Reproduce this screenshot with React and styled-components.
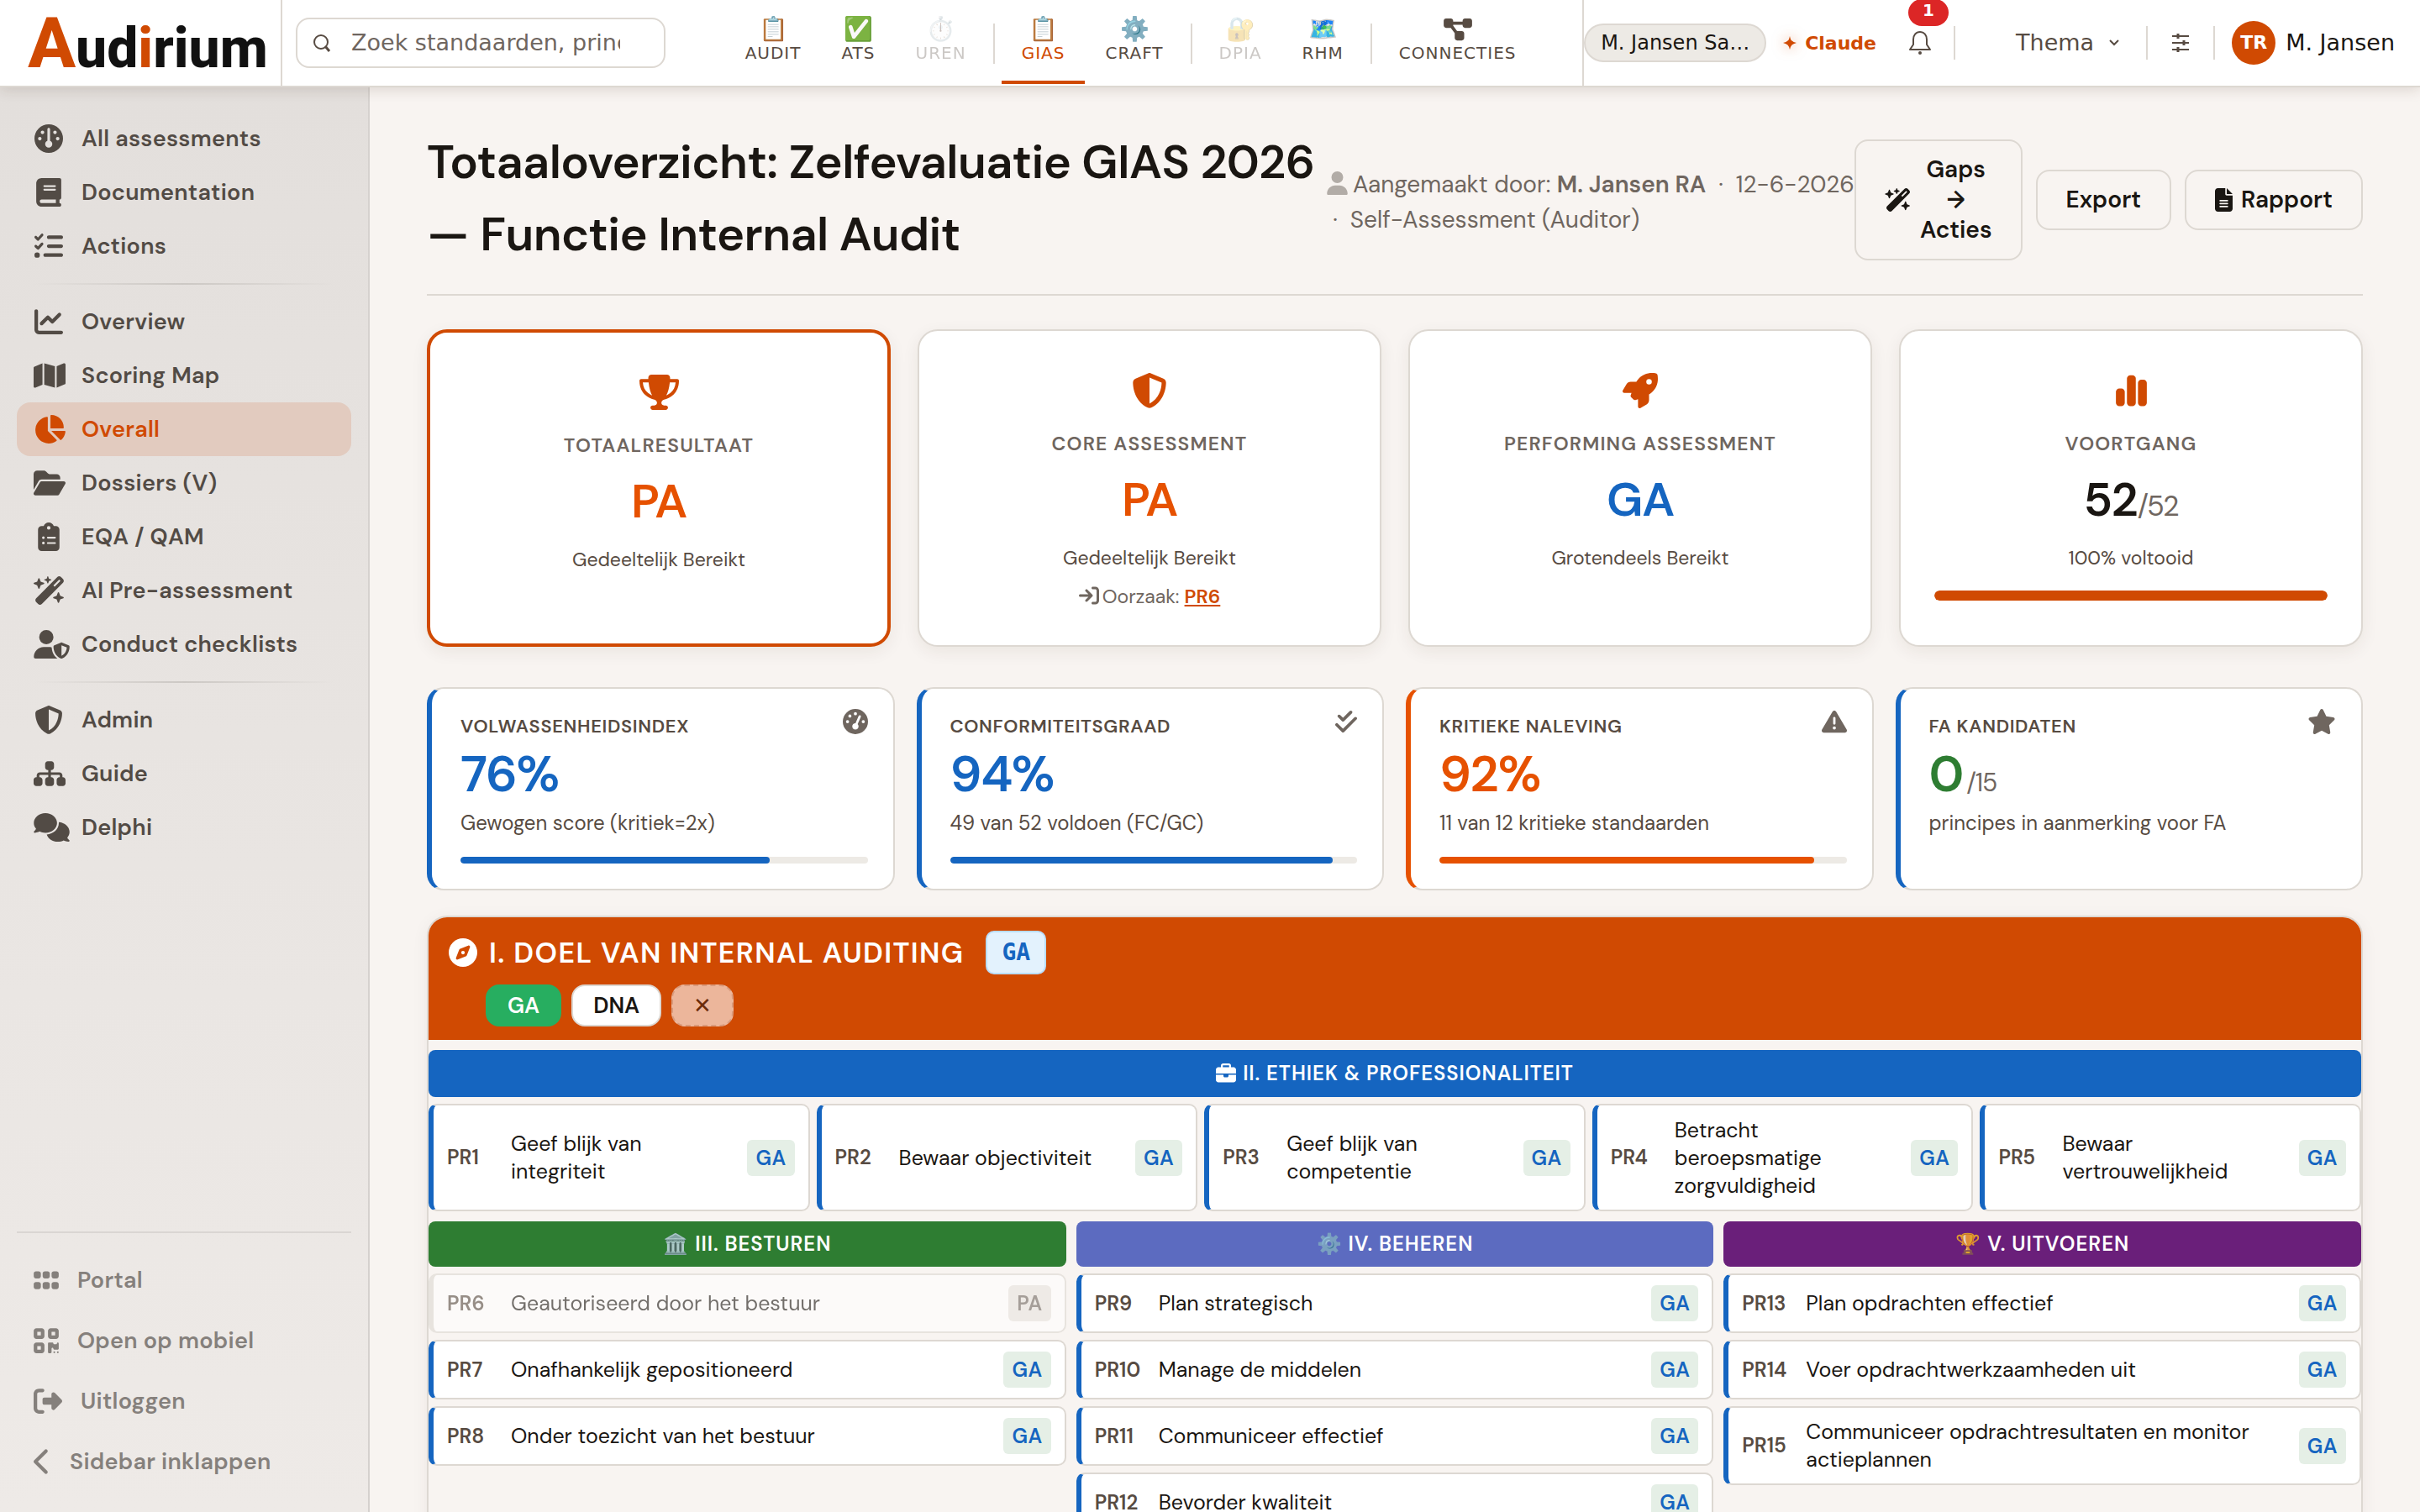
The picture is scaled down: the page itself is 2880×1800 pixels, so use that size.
import styled, { createGlobalStyle } from "styled-components";
import {
  FaGauge,
  FaGaugeHigh,
  FaBook,
  FaListCheck,
  FaChartLine,
  FaMap,
  FaChartPie,
  FaFolderOpen,
  FaClipboardList,
  FaWandMagicSparkles,
  FaUserShield,
  FaShieldHalved,
  FaSitemap,
  FaComments,
  FaGrip,
  FaQrcode,
  FaRightFromBracket,
  FaChevronLeft,
  FaTrophy,
  FaRocket,
  FaChartSimple,
  FaArrowRightToBracket,
  FaCheckDouble,
  FaTriangleExclamation,
  FaStar,
  FaCompass,
  FaBriefcase,
  FaDiagramProject,
  FaUser,
  FaFileLines,
} from "react-icons/fa6";

const GlobalStyle = createGlobalStyle`
  * {
    box-sizing: border-box;
  }
  body {
    margin: 0;
    background-color: #f8f4f1;
    color: #1a1612;
    font-family: "DM Sans", Inter, sans-serif;
    font-size: 28px;
    line-height: 1.5;
  }
  button, input {
    font: inherit;
    color: inherit;
  }
  button {
    cursor: pointer;
  }
  a {
    color: inherit;
    text-decoration: none;
  }
  h1, h2, h3, p, ul {
    margin: 0;
    padding: 0;
    font-weight: inherit;
  }
  ul {
    list-style: none;
  }
`;

/* the icon set is drawn 512 high, $w is the width of the icon's own grid */
const Glyph = styled.svg`
  flex: none;
  height: ${(p) => p.$size}px;
  width: ${(p) => Math.round((p.$size * (p.$w || 512)) / 512)}px;
`;

const Shell = styled.div`
  display: flex;
  flex-direction: column;
  height: 100vh;
  overflow: hidden;
`;

/* top bar */

const TopBar = styled.header`
  display: flex;
  flex: none;
  height: 104px;
  background-color: #fff;
  border-bottom: 2px solid #ddd8d2;
  box-shadow: 0 2px 16px rgba(60, 40, 20, 0.16);
  position: relative;
  z-index: 2;
  font-family: "DejaVu Sans", sans-serif;
  font-size: 27px;
  color: #574b42;
`;

const Logo = styled.a`
  display: flex;
  align-items: baseline;
  justify-content: center;
  width: 336px;
  padding-left: 18px;
  border-right: 2px solid #ddd8d2;
  font-family: Roboto, sans-serif;
  font-size: 66px;
  font-weight: 800;
  line-height: 104px;
  color: #111;

  span {
    color: #d04a02;
  }
`;

const LogoInitial = styled.span`
  font-size: 84px;
`;

const SearchArea = styled.div`
  display: flex;
  align-items: center;
  padding: 0 16px;
`;

const SearchBox = styled.label`
  display: flex;
  align-items: center;
  gap: 24px;
  width: 440px;
  height: 60px;
  padding: 0 52px 0 18px;
  border: 2px solid #ddd8d2;
  border-radius: 16px;

  svg {
    flex: none;
  }
`;

const SearchInput = styled.input`
  width: 100%;
  min-width: 0;
  border: 0;
  padding: 0;
  outline: 0;
  background: none;

  &::placeholder {
    color: #6f665f;
    opacity: 1;
  }
`;

const ModuleNav = styled.nav`
  display: flex;
  flex: 1;
  justify-content: center;
`;

const ModuleLink = styled.a`
  display: flex;
  flex-direction: column;
  align-items: center;
  margin-bottom: 2px;
  padding: 20px 24px 0;
  border-bottom: 4px solid ${(p) => (p.$active ? "#d04a02" : "transparent")};
  color: ${(p) => (p.$active ? "#d04a02" : "inherit")};
  font-size: 20px;
  line-height: 26px;
  letter-spacing: 1px;
  opacity: ${(p) => (p.$disabled ? 0.3 : 1)};
`;

const ModuleIcon = styled.span`
  display: flex;
  align-items: center;
  height: 30px;
  font-size: 28px;
  line-height: 30px;
  letter-spacing: 0;
`;

const ModuleDivider = styled.span`
  width: 2px;
  height: 48px;
  margin: 28px 8px 0;
  background-color: #ddd8d2;
`;

const Tools = styled.div`
  display: flex;
  align-items: center;
  padding-right: 30px;
  border-left: 2px solid #ddd8d2;
`;

const ClientPill = styled.button`
  height: 46px;
  padding: 0 18px;
  border: 2px solid #ddd8d2;
  border-radius: 23px;
  background-color: #edeae5;
  color: #1a1612;
  font-size: 24px;
  line-height: 42px;
`;

const ClaudeLink = styled.a`
  display: flex;
  align-items: center;
  gap: 10px;
  padding: 0 38px 0 20px;
  color: #d04a02;
  font-size: 22px;
  font-weight: 700;

  svg {
    filter: drop-shadow(0 0 8px rgba(208, 74, 2, 0.6));
  }
`;

const IconButton = styled.button`
  display: flex;
  position: relative;
  padding: 0 ${(p) => p.$pad}px;
  border: 0;
  background: none;
`;

const Badge = styled.span`
  position: absolute;
  left: 50%;
  top: -38px;
  width: 48px;
  height: 32px;
  margin-left: -14px;
  border-radius: 16px;
  background-color: #dc2626;
  color: #fff;
  font-size: 20px;
  font-weight: 700;
  line-height: 26px;
`;

const ToolDivider = styled.span`
  width: 2px;
  height: 40px;
  background-color: #ddd8d2;
`;

const BellDivider = styled(ToolDivider)`
  margin-left: 26px;
`;

const ThemeButton = styled.button`
  display: flex;
  align-items: center;
  gap: 18px;
  padding: 0 32px 0 72px;
  border: 0;
  background: none;
`;

const UserButton = styled.button`
  display: flex;
  align-items: center;
  gap: 12px;
  padding: 0 0 0 20px;
  border: 0;
  background: none;
  color: #1a1612;
`;

const Avatar = styled.span`
  width: 52px;
  height: 52px;
  border-radius: 50%;
  background-color: #d04a02;
  color: #fff;
  font-size: 22px;
  font-weight: 700;
  line-height: 52px;
`;

/* sidebar */

const Body = styled.div`
  display: flex;
  flex: 1;
  min-height: 0;
`;

const Sidebar = styled.aside`
  display: flex;
  flex-direction: column;
  justify-content: space-between;
  flex: none;
  width: 440px;
  padding: 29px 20px 24px;
  border-right: 2px solid #d5d1ce;
  background: linear-gradient(#e3dfdc, #eeeae7);
  color: #524b45;
  font-size: 27px;
  font-weight: 600;
  letter-spacing: 0.01em;
`;

const SideLink = styled.a`
  display: flex;
  align-items: center;
  gap: 21px;
  height: 64px;
  padding: 0 20px;
  border-radius: 16px;
  background-color: ${(p) => (p.$active ? "#e2cbbf" : "transparent")};
  color: ${(p) => (p.$active ? "#d04a02" : "inherit")};
`;

const SideIcon = styled.span`
  display: flex;
  justify-content: ${(p) => (p.$wide ? "flex-start" : "center")};
  flex: none;
  width: 36px;
`;

const SideDivider = styled.li`
  height: 2px;
  margin: 12px 20px;
  background: linear-gradient(90deg, transparent, #ccc8c4, transparent);
`;

const FooterList = styled.ul`
  padding-top: 20px;
  border-top: 2px solid #dad6d3;
`;

const FooterLink = styled.a`
  display: flex;
  align-items: center;
  gap: 22px;
  height: 72px;
  padding: 0 20px;
  color: #85807c;
`;

/* page */

const Main = styled.main`
  flex: 1;
  min-width: 0;
  padding: 46px 68px;
  overflow-y: auto;
  scrollbar-width: none;
`;

const PageHead = styled.div`
  display: grid;
  grid-template-columns: minmax(0, 1fr) auto auto;
  align-items: center;
  padding-bottom: 28px;
  border-bottom: 2px solid #ddd8d2;
`;

const Title = styled.h1`
  font-size: 56px;
  font-weight: 600;
  line-height: 86px;
  letter-spacing: -0.01em;
`;

const Meta = styled.p`
  padding-top: 10px;
  color: #6f665f;
  line-height: 42px;

  svg {
    margin-right: 6px;
    vertical-align: -3px;
    opacity: 0.5;
  }
  b {
    font-weight: 600;
  }
`;

const MetaLine = styled.span`
  display: block;
  white-space: nowrap;
`;

const Actions = styled.div`
  display: flex;
  align-items: center;
  gap: 16px;
  padding-top: 4px;
`;

const ActionButton = styled.button`
  display: flex;
  align-items: center;
  gap: 10px;
  padding: 16px 34px;
  border: 2px solid #ddd8d2;
  border-radius: 16px;
  background: none;
  font-weight: 600;
  line-height: 36px;

  span {
    width: min-content;
  }
`;

const CardGrid = styled.div`
  display: grid;
  grid-template-columns: repeat(4, minmax(0, 1fr));
  gap: ${(p) => p.$gap}px;
  margin-top: ${(p) => p.$top}px;
`;

const ResultCard = styled.section`
  padding: 40px 40px 41px;
  border: ${(p) => (p.$primary ? "4px solid #d04a02" : "2px solid #ddd8d2")};
  border-radius: 24px;
  background-color: #fff;
  box-shadow: 0 6px 20px rgba(60, 40, 20, 0.07);
  text-align: center;
`;

const ResultIcon = styled.div`
  display: flex;
  align-items: center;
  justify-content: center;
  height: 62px;
  color: #d04a02;
`;

const ResultLabel = styled.h2`
  margin-top: 15px;
  color: #6f665f;
  font-size: 23px;
  font-weight: 600;
  line-height: 34px;
  letter-spacing: 0.05em;
`;

const ResultValue = styled.p`
  margin: 8px 0 10px;
  color: ${(p) => p.$color};
  font-size: 56px;
  font-weight: 600;
  line-height: 84px;
  letter-spacing: -0.02em;

  small {
    color: #6f665f;
    font-size: 34px;
    font-weight: 400;
    line-height: 34px;
  }
`;

const ResultNote = styled.p`
  color: #574b42;
  font-size: 23px;
  line-height: 34px;
`;

const Cause = styled.p`
  margin-top: 12px;
  color: #6f665f;
  font-size: 23px;
  line-height: 34px;

  svg {
    margin-right: 4px;
    vertical-align: -3px;
  }
  a {
    color: #d04a02;
    font-weight: 600;
    text-decoration: underline;
  }
`;

const Track = styled.div`
  height: ${(p) => p.$height}px;
  margin-top: 22px;
  border-radius: 6px;
  background-color: #edeae5;
  overflow: hidden;
`;

const Fill = styled.div`
  height: 100%;
  border-radius: 6px;
  background-color: ${(p) => p.$color};
`;

const StatCard = styled.section`
  padding: 28px 30px 30px 34px;
  border: 2px solid #ddd8d2;
  border-left: 6px solid ${(p) => p.$accent};
  border-radius: 20px;
  background-color: #fff;
`;

const StatHead = styled.div`
  display: flex;
  justify-content: space-between;
  align-items: flex-start;
  height: 34px;
  color: #6f665f;

  svg {
    margin-top: -4px;
  }
`;

const StatLabel = styled.h2`
  color: #574b42;
  font-size: 22px;
  font-weight: 600;
  line-height: 34px;
  letter-spacing: 0.03em;
`;

const StatValue = styled.p`
  margin: 4px 0;
  color: ${(p) => p.$color};
  font-size: 60px;
  font-weight: 600;
  line-height: 72px;
  letter-spacing: -0.02em;

  small {
    margin-left: 4px;
    color: #6f665f;
    font-size: 30px;
    font-weight: 400;
    line-height: 30px;
  }
`;

const StatNote = styled.p`
  color: #574b42;
  font-size: 24px;
  line-height: 36px;
`;

/* domain map */

const DomainPanel = styled.section`
  margin-top: 30px;
  padding-bottom: 24px;
  border: 2px solid #ddd8d2;
  border-radius: 24px;
  box-shadow: 0 4px 20px rgba(60, 40, 20, 0.06);
  overflow: hidden;
`;

const DomainHead = styled.div`
  display: flex;
  flex-direction: column;
  gap: 12px;
  padding: 16px 24px;
  background-color: #d04a02;
  color: #fff;
`;

const DomainTitle = styled.h2`
  display: flex;
  align-items: center;
  gap: 14px;
  height: 52px;
  font-size: 34px;
  font-weight: 600;
  letter-spacing: 0.04em;
`;

const ScoreTag = styled.span`
  margin-left: 12px;
  padding: 0 17px;
  border: 2px solid #bbdefb;
  border-radius: 10px;
  background-color: #e3f2fd;
  color: #1565c0;
  font-family: "DejaVu Sans Mono", monospace;
  font-size: 28px;
  font-weight: 700;
  line-height: 48px;
  letter-spacing: 0;
`;

const Choices = styled.div`
  display: flex;
  gap: 12px;
  padding-left: 44px;
`;

const Choice = styled.button`
  height: 50px;
  padding: 0 24px;
  border: 2px solid #ddd8d2;
  border-radius: 16px;
  background-color: #fff;
  font-size: 26px;
  font-weight: 600;
  line-height: 46px;
  color: #1a1612;
`;

const ChosenChoice = styled(Choice)`
  border-color: #27ae60;
  background-color: #27ae60;
  color: #fff;
`;

const ClearChoice = styled(Choice)`
  border: 2px dashed #d99a7c;
  background-color: #ecb69b;
  color: #6b2b0a;
  font-weight: 400;
`;

const Band = styled.h3`
  display: flex;
  align-items: center;
  justify-content: center;
  gap: 8px;
  height: ${(p) => p.$height}px;
  border-radius: 8px;
  background-color: ${(p) => p.$color};
  color: #fff;
  font-size: 24px;
  font-weight: 600;
  letter-spacing: 0.04em;
`;

const BandEmoji = styled.span`
  opacity: 0.8;
  letter-spacing: 0;
`;

const EthicsBlock = styled.div`
  margin: 12px 0;
`;

const EthicsGrid = styled.ul`
  display: grid;
  grid-template-columns: repeat(5, minmax(0, 1fr));
  grid-auto-rows: minmax(128px, auto);
  gap: 8px;
  margin-top: 8px;
`;

const Columns = styled.div`
  display: grid;
  grid-template-columns: repeat(3, minmax(0, 1fr));
  align-items: start;
  gap: 12px;
`;

const ColumnList = styled.ul`
  display: flex;
  flex-direction: column;
  gap: 8px;
  margin-top: 8px;
`;

const PrincipleRow = styled.li`
  display: flex;
  align-items: center;
  gap: 12px;
  padding: 12px 16px;
  border: 2px solid #ddd8d2;
  border-left: 6px solid ${(p) => (p.$muted ? "#ddd8d2" : "#1565c0")};
  border-radius: 10px;
  background-color: #fff;
  opacity: ${(p) => (p.$muted ? 0.6 : 1)};
`;

const Code = styled.span`
  min-width: 64px;
  color: #574b42;
  font-size: 24px;
  font-weight: 600;
`;

const Label = styled.span`
  flex: 1;
  font-size: 25px;
  line-height: 33px;
`;

const Grade = styled.span`
  padding: 0 10px;
  border-radius: 6px;
  background-color: ${(p) => (p.$muted ? "#e9e5df" : "#e5efe6")};
  color: ${(p) => (p.$muted ? "#6f665f" : "#1565c0")};
  font-size: 24px;
  font-weight: 600;
  line-height: 43px;
  letter-spacing: 0.02em;
`;

const modules = [
  { emoji: "📋", label: "AUDIT" },
  { emoji: "✅", label: "ATS" },
  { emoji: "⏱️", label: "UREN", disabled: true },
  null,
  { emoji: "📋", label: "GIAS", active: true },
  { emoji: "⚙️", label: "CRAFT" },
  null,
  { emoji: "🔐", label: "DPIA", disabled: true },
  { emoji: "🗺️", label: "RHM" },
  null,
  { icon: FaDiagramProject, w: 576, label: "CONNECTIES" },
];

const sideLinks = [
  { icon: FaGauge, label: "All assessments" },
  { icon: FaBook, w: 448, label: "Documentation" },
  { icon: FaListCheck, label: "Actions" },
  null,
  { icon: FaChartLine, label: "Overview" },
  { icon: FaMap, w: 576, label: "Scoring Map" },
  { icon: FaChartPie, w: 576, label: "Overall", active: true },
  { icon: FaFolderOpen, w: 576, label: "Dossiers (V)" },
  { icon: FaClipboardList, w: 384, label: "EQA / QAM" },
  { icon: FaWandMagicSparkles, w: 576, label: "AI Pre-assessment" },
  { icon: FaUserShield, w: 640, label: "Conduct checklists" },
  null,
  { icon: FaShieldHalved, label: "Admin" },
  { icon: FaSitemap, w: 576, label: "Guide" },
  { icon: FaComments, w: 640, label: "Delphi" },
];

const footerLinks = [
  { icon: FaGrip, w: 448, label: "Portal" },
  { icon: FaQrcode, w: 448, label: "Open op mobiel" },
  { icon: FaRightFromBracket, label: "Uitloggen" },
  { icon: FaChevronLeft, w: 320, label: "Sidebar inklappen" },
];

const stats = [
  {
    label: "VOLWASSENHEIDSINDEX",
    icon: FaGaugeHigh,
    value: "76%",
    color: "#1565c0",
    accent: "#1565c0",
    note: "Gewogen score (kritiek=2x)",
    percent: 76,
  },
  {
    label: "CONFORMITEITSGRAAD",
    icon: FaCheckDouble,
    w: 448,
    value: "94%",
    color: "#1565c0",
    accent: "#1565c0",
    note: "49 van 52 voldoen (FC/GC)",
    percent: 94,
  },
  {
    label: "KRITIEKE NALEVING",
    icon: FaTriangleExclamation,
    value: "92%",
    color: "#e65100",
    accent: "#e65100",
    note: "11 van 12 kritieke standaarden",
    percent: 92,
  },
  {
    label: "FA KANDIDATEN",
    icon: FaStar,
    w: 576,
    value: "0",
    total: "/15",
    color: "#2e7d32",
    accent: "#1565c0",
    note: "principes in aanmerking voor FA",
  },
];

const ethics = [
  ["PR1", "Geef blijk van integriteit"],
  ["PR2", "Bewaar objectiviteit"],
  ["PR3", "Geef blijk van competentie"],
  ["PR4", "Betracht beroepsmatige zorgvuldigheid"],
  ["PR5", "Bewaar vertrouwelijkheid"],
];

const columns = [
  {
    emoji: "🏛️",
    title: "III. BESTUREN",
    color: "#2e7d32",
    rows: [
      ["PR6", "Geautoriseerd door het bestuur", "PA"],
      ["PR7", "Onafhankelijk gepositioneerd"],
      ["PR8", "Onder toezicht van het bestuur"],
    ],
  },
  {
    emoji: "⚙️",
    title: "IV. BEHEREN",
    color: "#5c6bc0",
    rows: [
      ["PR9", "Plan strategisch"],
      ["PR10", "Manage de middelen"],
      ["PR11", "Communiceer effectief"],
      ["PR12", "Bevorder kwaliteit"],
    ],
  },
  {
    emoji: "🏆",
    title: "V. UITVOEREN",
    color: "#6a1f7a",
    rows: [
      ["PR13", "Plan opdrachten effectief"],
      ["PR14", "Voer opdrachtwerkzaamheden uit"],
      ["PR15", "Communiceer opdrachtresultaten en monitor actieplannen"],
    ],
  },
];

const SearchIcon = () => (
  <svg width="22" height="22" viewBox="0 0 22 22" fill="none" stroke="#574b42" strokeWidth="2">
    <circle cx="10" cy="10" r="8" />
    <path d="M15 15l5 6" strokeWidth="3" />
  </svg>
);

const SparkIcon = () => (
  <svg width="16" height="16" viewBox="0 0 16 16" fill="#d04a02">
    <path d="M8 0Q9 5 10.500 5.500Q12 7 16 8Q12 9 10.500 10.500Q9 12 8 16Q7 12 5.500 10.500Q4 9 0 8Q4 7 5.500 5.500Q7 5 8 0z" />
  </svg>
);

const BellIcon = () => (
  <svg width="28" height="28" viewBox="0 0 28 28" fill="none" stroke="#574b42" strokeWidth="2">
    <path d="M14 1C9 1 6 5 6 10v6l-4 6h24l-4-6v-6c0-5-3-9-8-9z" strokeLinejoin="round" />
    <circle cx="14" cy="26" r="2" fill="#574b42" stroke="none" />
  </svg>
);

const ChevronIcon = () => (
  <svg width="12" height="8" viewBox="0 0 12 8" fill="none" stroke="#574b42" strokeWidth="2">
    <path d="M1 1l5 5 5-5" />
  </svg>
);

const SlidersIcon = () => (
  <svg width="20" height="22" viewBox="0 0 20 22" fill="none" stroke="#574b42" strokeWidth="2">
    <path d="M0 3h20M0 11h20M0 19h20" />
    <path d="M7 0v6M14 8v6M7 16v6" strokeWidth="3" />
  </svg>
);

const Principle = ({ code, label, grade = "GA" }) => {
  const muted = grade === "PA";
  return (
    <PrincipleRow $muted={muted}>
      <Code>{code}</Code>
      <Label>{label}</Label>
      <Grade $muted={muted}>{grade}</Grade>
    </PrincipleRow>
  );
};

const Header = () => (
  <TopBar>
    <Logo href="#">
      <LogoInitial>A</LogoInitial>ud<span>i</span>rium
    </Logo>
    <SearchArea>
      <SearchBox>
        <SearchIcon />
        <SearchInput aria-label="Zoeken" placeholder="Zoek standaarden, principes" />
      </SearchBox>
    </SearchArea>
    <ModuleNav>
      {modules.map((m, i) =>
        m ? (
          <ModuleLink href="#" key={m.label} $active={m.active} $disabled={m.disabled}>
            <ModuleIcon>{m.emoji || <Glyph as={m.icon} $w={m.w} $size={30} />}</ModuleIcon>
            {m.label}
          </ModuleLink>
        ) : (
          <ModuleDivider key={i} />
        )
      )}
    </ModuleNav>
    <Tools>
      <ClientPill>M. Jansen Sa…</ClientPill>
      <ClaudeLink href="#">
        <SparkIcon />
        Claude
      </ClaudeLink>
      <IconButton $pad={0} aria-label="Meldingen">
        <BellIcon />
        <Badge>1</Badge>
      </IconButton>
      <BellDivider />
      <ThemeButton>
        Thema
        <ChevronIcon />
      </ThemeButton>
      <ToolDivider />
      <IconButton $pad={29} aria-label="Instellingen">
        <SlidersIcon />
      </IconButton>
      <ToolDivider />
      <UserButton>
        <Avatar>TR</Avatar>
        M. Jansen
      </UserButton>
    </Tools>
  </TopBar>
);

const App = () => {
  return (
    <Shell>
      <GlobalStyle />
      <Header />
      <Body>
        <Sidebar>
          <ul>
            {sideLinks.map((l, i) =>
              l ? (
                <li key={l.label}>
                  <SideLink href="#" $active={l.active}>
                    <SideIcon $wide={l.w > 512}>
                      <Glyph as={l.icon} $w={l.w} $size={34} />
                    </SideIcon>
                    {l.label}
                  </SideLink>
                </li>
              ) : (
                <SideDivider key={i} />
              )
            )}
          </ul>
          <FooterList>
            {footerLinks.map((l) => (
              <li key={l.label}>
                <FooterLink href="#">
                  <Glyph as={l.icon} $w={l.w} $size={34} />
                  {l.label}
                </FooterLink>
              </li>
            ))}
          </FooterList>
        </Sidebar>
        <Main>
          <PageHead>
            <Title>Totaaloverzicht: Zelfevaluatie GIAS 2026 — Functie Internal Audit</Title>
            <Meta>
              <MetaLine>
                <Glyph as={FaUser} $w={448} $size={28} />
                Aangemaakt door: <b>M. Jansen RA</b> &nbsp;·&nbsp; 12-6-2026
              </MetaLine>
              <MetaLine>&nbsp;·&nbsp; Self-Assessment (Auditor)</MetaLine>
            </Meta>
            <Actions>
              <ActionButton>
                <Glyph as={FaWandMagicSparkles} $w={576} $size={28} />
                <span>Gaps → Acties</span>
              </ActionButton>
              <ActionButton>Export</ActionButton>
              <ActionButton>
                <Glyph as={FaFileLines} $w={384} $size={28} />
                Rapport
              </ActionButton>
            </Actions>
          </PageHead>

          <CardGrid $gap={32} $top={40}>
            <ResultCard $primary>
              <ResultIcon>
                <Glyph as={FaTrophy} $w={576} $size={42} />
              </ResultIcon>
              <ResultLabel>TOTAALRESULTAAT</ResultLabel>
              <ResultValue $color="#e65100">PA</ResultValue>
              <ResultNote>Gedeeltelijk Bereikt</ResultNote>
            </ResultCard>
            <ResultCard>
              <ResultIcon>
                <Glyph as={FaShieldHalved} $size={42} />
              </ResultIcon>
              <ResultLabel>CORE ASSESSMENT</ResultLabel>
              <ResultValue $color="#e65100">PA</ResultValue>
              <ResultNote>Gedeeltelijk Bereikt</ResultNote>
              <Cause>
                <Glyph as={FaArrowRightToBracket} $size={24} />
                Oorzaak: <a href="#">PR6</a>
              </Cause>
            </ResultCard>
            <ResultCard>
              <ResultIcon>
                <Glyph as={FaRocket} $size={42} />
              </ResultIcon>
              <ResultLabel>PERFORMING ASSESSMENT</ResultLabel>
              <ResultValue $color="#1565c0">GA</ResultValue>
              <ResultNote>Grotendeels Bereikt</ResultNote>
            </ResultCard>
            <ResultCard>
              <ResultIcon>
                <Glyph as={FaChartSimple} $w={448} $size={42} />
              </ResultIcon>
              <ResultLabel>VOORTGANG</ResultLabel>
              <ResultValue $color="#1a1612">
                52<small>/52</small>
              </ResultValue>
              <ResultNote>100% voltooid</ResultNote>
              <Track $height={12}>
                <Fill $color="#d04a02" style={{ width: "100%" }} />
              </Track>
            </ResultCard>
          </CardGrid>

          <CardGrid $gap={26} $top={48}>
            {stats.map((s) => (
              <StatCard key={s.label} $accent={s.accent}>
                <StatHead>
                  <StatLabel>{s.label}</StatLabel>
                  <Glyph as={s.icon} $w={s.w} $size={30} />
                </StatHead>
                <StatValue $color={s.color}>
                  {s.value}
                  {s.total && <small>{s.total}</small>}
                </StatValue>
                <StatNote>{s.note}</StatNote>
                {s.percent && (
                  <Track $height={8}>
                    <Fill $color={s.color} style={{ width: `${s.percent}%` }} />
                  </Track>
                )}
              </StatCard>
            ))}
          </CardGrid>

          <DomainPanel>
            <DomainHead>
              <DomainTitle>
                <Glyph as={FaCompass} $size={34} />
                I. DOEL VAN INTERNAL AUDITING
                <ScoreTag>GA</ScoreTag>
              </DomainTitle>
              <Choices>
                <ChosenChoice>GA</ChosenChoice>
                <Choice>DNA</Choice>
                <ClearChoice>✕</ClearChoice>
              </Choices>
            </DomainHead>
            <EthicsBlock>
              <Band $height={56} $color="#1565c0">
                <Glyph as={FaBriefcase} $size={24} />
                II. ETHIEK &amp; PROFESSIONALITEIT
              </Band>
              <EthicsGrid>
                {ethics.map(([code, label]) => (
                  <Principle key={code} code={code} label={label} />
                ))}
              </EthicsGrid>
            </EthicsBlock>
            <Columns>
              {columns.map((c) => (
                <div key={c.title}>
                  <Band $height={54} $color={c.color}>
                    <BandEmoji>{c.emoji}</BandEmoji>
                    {c.title}
                  </Band>
                  <ColumnList>
                    {c.rows.map(([code, label, grade]) => (
                      <Principle key={code} code={code} label={label} grade={grade} />
                    ))}
                  </ColumnList>
                </div>
              ))}
            </Columns>
          </DomainPanel>
        </Main>
      </Body>
    </Shell>
  );
};

export default App;
